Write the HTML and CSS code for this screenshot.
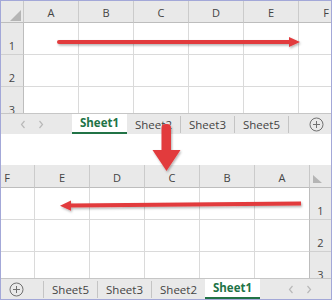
FILE: index.html
```html
<!DOCTYPE html>
<html>
<head>
<meta charset="utf-8">
<link rel="stylesheet" href="styles.css">
</head>
<body>
<div class="frame">
  <section class="sheet">
    <div class="grid">
      <div class="corner"></div><div class="colh">A</div><div class="colh">B</div><div class="colh">C</div><div class="colh">D</div><div class="colh">E</div><div class="colh">F</div>
      <div class="rowh">1</div><div class="cell"></div><div class="cell"></div><div class="cell"></div><div class="cell"></div><div class="cell"></div><div class="cell"></div>
      <div class="rowh">2</div><div class="cell"></div><div class="cell"></div><div class="cell"></div><div class="cell"></div><div class="cell"></div><div class="cell"></div>
      <div class="rowh">3</div><div class="cell"></div><div class="cell"></div><div class="cell"></div><div class="cell"></div><div class="cell"></div><div class="cell"></div>
    </div>
    <div class="tabbar">
      <div class="nav">
        <svg class="chev" width="6" height="9" viewBox="0 0 6 9"><path d="M4.5 1 L1.5 4.5 L4.5 8" /></svg>
        <svg class="chev" width="6" height="9" viewBox="0 0 6 9"><path d="M1.5 1 L4.5 4.5 L1.5 8" /></svg>
      </div>
      <div class="tab active">Sheet1</div>
      <div class="tab">Sheet2</div>
      <div class="tab">Sheet3</div>
      <div class="tab">Sheet5</div>
      <div class="spacer"></div>
      <div class="add"><svg width="15" height="15" viewBox="0 0 15 15"><circle cx="7.5" cy="7.5" r="6.5"/><path d="M7.5 4 V11 M4 7.5 H11"/></svg></div>
    </div>
  </section>
  <div class="gap"></div>
  <section class="sheet rtl">
    <div class="grid">
      <div class="corner"></div><div class="colh">A</div><div class="colh">B</div><div class="colh">C</div><div class="colh">D</div><div class="colh">E</div><div class="colh">F</div>
      <div class="rowh">1</div><div class="cell"></div><div class="cell"></div><div class="cell"></div><div class="cell"></div><div class="cell"></div><div class="cell"></div>
      <div class="rowh">2</div><div class="cell"></div><div class="cell"></div><div class="cell"></div><div class="cell"></div><div class="cell"></div><div class="cell"></div>
      <div class="rowh">3</div><div class="cell"></div><div class="cell"></div><div class="cell"></div><div class="cell"></div><div class="cell"></div><div class="cell"></div>
    </div>
    <div class="tabbar">
      <div class="nav">
        <svg class="chev" width="6" height="9" viewBox="0 0 6 9"><path d="M4.5 1 L1.5 4.5 L4.5 8" /></svg>
        <svg class="chev" width="6" height="9" viewBox="0 0 6 9"><path d="M1.5 1 L4.5 4.5 L1.5 8" /></svg>
      </div>
      <div class="tab active">Sheet1</div>
      <div class="tab">Sheet2</div>
      <div class="tab">Sheet3</div>
      <div class="tab">Sheet5</div>
      <div class="spacer"></div>
      <div class="add"><svg width="15" height="15" viewBox="0 0 15 15"><circle cx="7.5" cy="7.5" r="6.5"/><path d="M7.5 4 V11 M4 7.5 H11"/></svg></div>
    </div>
  </section>
  <svg class="arrows" width="332" height="300" viewBox="0 0 332 300">
    <defs>
      <filter id="sh" x="-10%" y="-50%" width="120%" height="200%">
        <feDropShadow dx="1" dy="1.5" stdDeviation="1" flood-color="#000" flood-opacity="0.3"/>
      </filter>
    </defs>
    <g fill="#e23a3c" filter="url(#sh)">
      <rect x="57" y="40" width="235" height="4" rx="2"/>
      <polygon points="289,37 300,42 289,47"/>
      <polygon points="70,203.6 301,201.4 301,205.4 70,207.6"/>
      <polygon points="71,200.5 60,205.8 71,210.8"/>
      <rect x="161.5" y="124" width="9.5" height="30" rx="4"/>
      <polygon points="152.5,150 180.5,150 166.5,171"/>
    </g>
  </svg>
</div>
</body>
</html>
```

FILE: styles.css
```css
* { box-sizing: border-box; }
html, body { margin: 0; padding: 0; background: #fff; }
body { font-family: "Open Sans", "Noto Sans", sans-serif; color: #444; }

.frame {
  position: relative;
  width: 332px;
  height: 300px;
  border: 1px solid #a3a8d8;
  overflow: hidden;
  display: flex;
  flex-direction: column;
  background: #fff;
}

.sheet { display: flex; flex-direction: column; }
.sheet.rtl { direction: rtl; }

.grid {
  display: grid;
  grid-template-columns: 23px repeat(6, 55px);
  grid-template-rows: 22px repeat(3, 32px);
  height: 112px;
  overflow: hidden;
}
.rtl .grid {
  grid-template-columns: 22px repeat(6, 55px);
  grid-template-rows: 23px repeat(3, 32px);
  height: 113px;
}

.corner, .colh, .rowh, .cell {
  border-inline-end: 1px solid #dadada;
  border-bottom: 1px solid #dadada;
}

.corner {
  position: relative;
  background: #e9e9e9;
  border-inline-end-color: #c8c8c8;
  border-bottom-color: #bdbdbd;
}
.corner::after {
  content: "";
  position: absolute;
  right: 2px;
  bottom: 1px;
  width: 11px;
  height: 11px;
  background: #b5b5b5;
  clip-path: polygon(100% 0, 100% 100%, 0 100%);
}
.rtl .corner::after {
  right: auto;
  left: 3px;
  bottom: 4px;
  width: 9px;
  height: 8px;
  clip-path: polygon(0 0, 100% 100%, 0 100%);
}

.colh {
  background: #e9e9e9;
  border-inline-end-color: #cbcbcb;
  border-bottom-color: #bdbdbd;
  display: flex;
  align-items: flex-end;
  justify-content: center;
  font-size: 11px;
  line-height: 14px;
  padding-bottom: 2px;
}

.rowh {
  background: #e9e9e9;
  border-inline-end-color: #bdbdbd;
  border-bottom-color: #d0d0d0;
  display: flex;
  align-items: flex-end;
  justify-content: center;
  font-size: 11px;
  line-height: 14px;
  padding-bottom: 1px;
}

.cell { background: #fff; }

.tabbar {
  height: 21px;
  background: #e9e9e9;
  border-top: 1px solid #c6c6c6;
  display: flex;
  align-items: stretch;
  font-size: 11.5px;
}

.nav {
  width: 71px;
  display: flex;
  align-items: center;
  gap: 12px;
  padding-inline-start: 19px;
}
.chev { fill: none; stroke: #b9b9b9; stroke-width: 1.2; }
.rtl .chev { transform: scaleX(-1); }

.tab {
  width: 54px;
  display: flex;
  align-items: center;
  justify-content: center;
  border-inline-end: 1px solid #c4c4c4;
  margin: 2px 0 1px;
  line-height: 16px;
  color: #444;
  unicode-bidi: isolate;
}
.tab.active {
  width: 55px;
  margin: 0;
  border-inline-end: none;
  background: #fff;
  color: #217346;
  font-weight: 700;
  border-bottom: 2px solid #217346;
}

.spacer { flex: 1; }

.add {
  width: 30px;
  display: flex;
  align-items: center;
  justify-content: center;
}
.add svg { fill: none; stroke: #707070; stroke-width: 1; }

.gap { height: 31px; background: #fff; }

.arrows {
  position: absolute;
  left: -1px;
  top: -1px;
  pointer-events: none;
}
```
